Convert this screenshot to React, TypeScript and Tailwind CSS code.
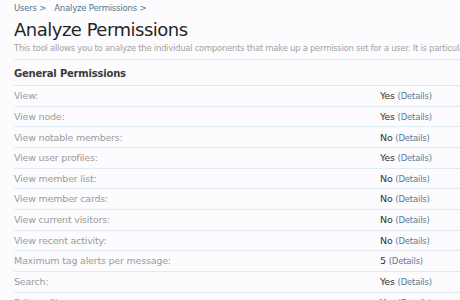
const rows: [string, string][] = [
  ['View:', 'Yes'],
  ['View node:', 'Yes'],
  ['View notable members:', 'No'],
  ['View user profiles:', 'Yes'],
  ['View member list:', 'No'],
  ['View member cards:', 'No'],
  ['View current visitors:', 'No'],
  ['View recent activity:', 'No'],
  ['Maximum tag alerts per message:', '5'],
  ['Search:', 'Yes'],
  ['Edit profile:', 'Yes'],
];

export default function App() {
  return (
    <div className="h-[300px] w-[460px] overflow-hidden bg-[#fcfcfe] font-['DejaVu_Sans',sans-serif]">
      <div className="w-[900px] pl-[14px]">
        {/* Breadcrumb */}
        <div className="flex h-[16px] items-center pt-[1px] text-[8.5px] tracking-[-0.2px] text-[#55758f]">
          <span>Users &gt;</span>
          <span className="ml-[8px]">Analyze Permissions &gt;</span>
        </div>

        <h1 className="mt-[1px] h-[25px] text-[18px] leading-[25px] tracking-[-0.5px] text-[#262626]">
          Analyze Permissions
        </h1>
        <p className="h-[13px] text-[8.5px] leading-[13px] tracking-[-0.28px] text-[#a3a3a3]">
          This tool allows you to analyze the individual components that make up a permission set for a user. It is particularly useful for tracking down why a user has a permission.
        </p>

        <div className="mt-[4px] border-t border-[#dcecf2]">
          <h3 className="flex h-[26px] items-center pt-[1px] border-b border-[#dde8f3] text-[10px] font-bold tracking-[-0.2px] text-[#3a3a3a]">
            General Permissions
          </h3>
          {rows.map(([label, value]) => (
            <div
              key={label}
              className="flex h-[20.67px] items-center pt-[1px] border-b border-[#dfecf3] text-[9.5px] tracking-[-0.2px]"
            >
              <div className="w-[366px] text-[#9b9b9b]">{label}</div>
              <div className="text-[#333]">
                {value} <span className="text-[8.5px] text-[#5d7a95]">(Details)</span>
              </div>
            </div>
          ))}
        </div>
      </div>
    </div>
  );
}
